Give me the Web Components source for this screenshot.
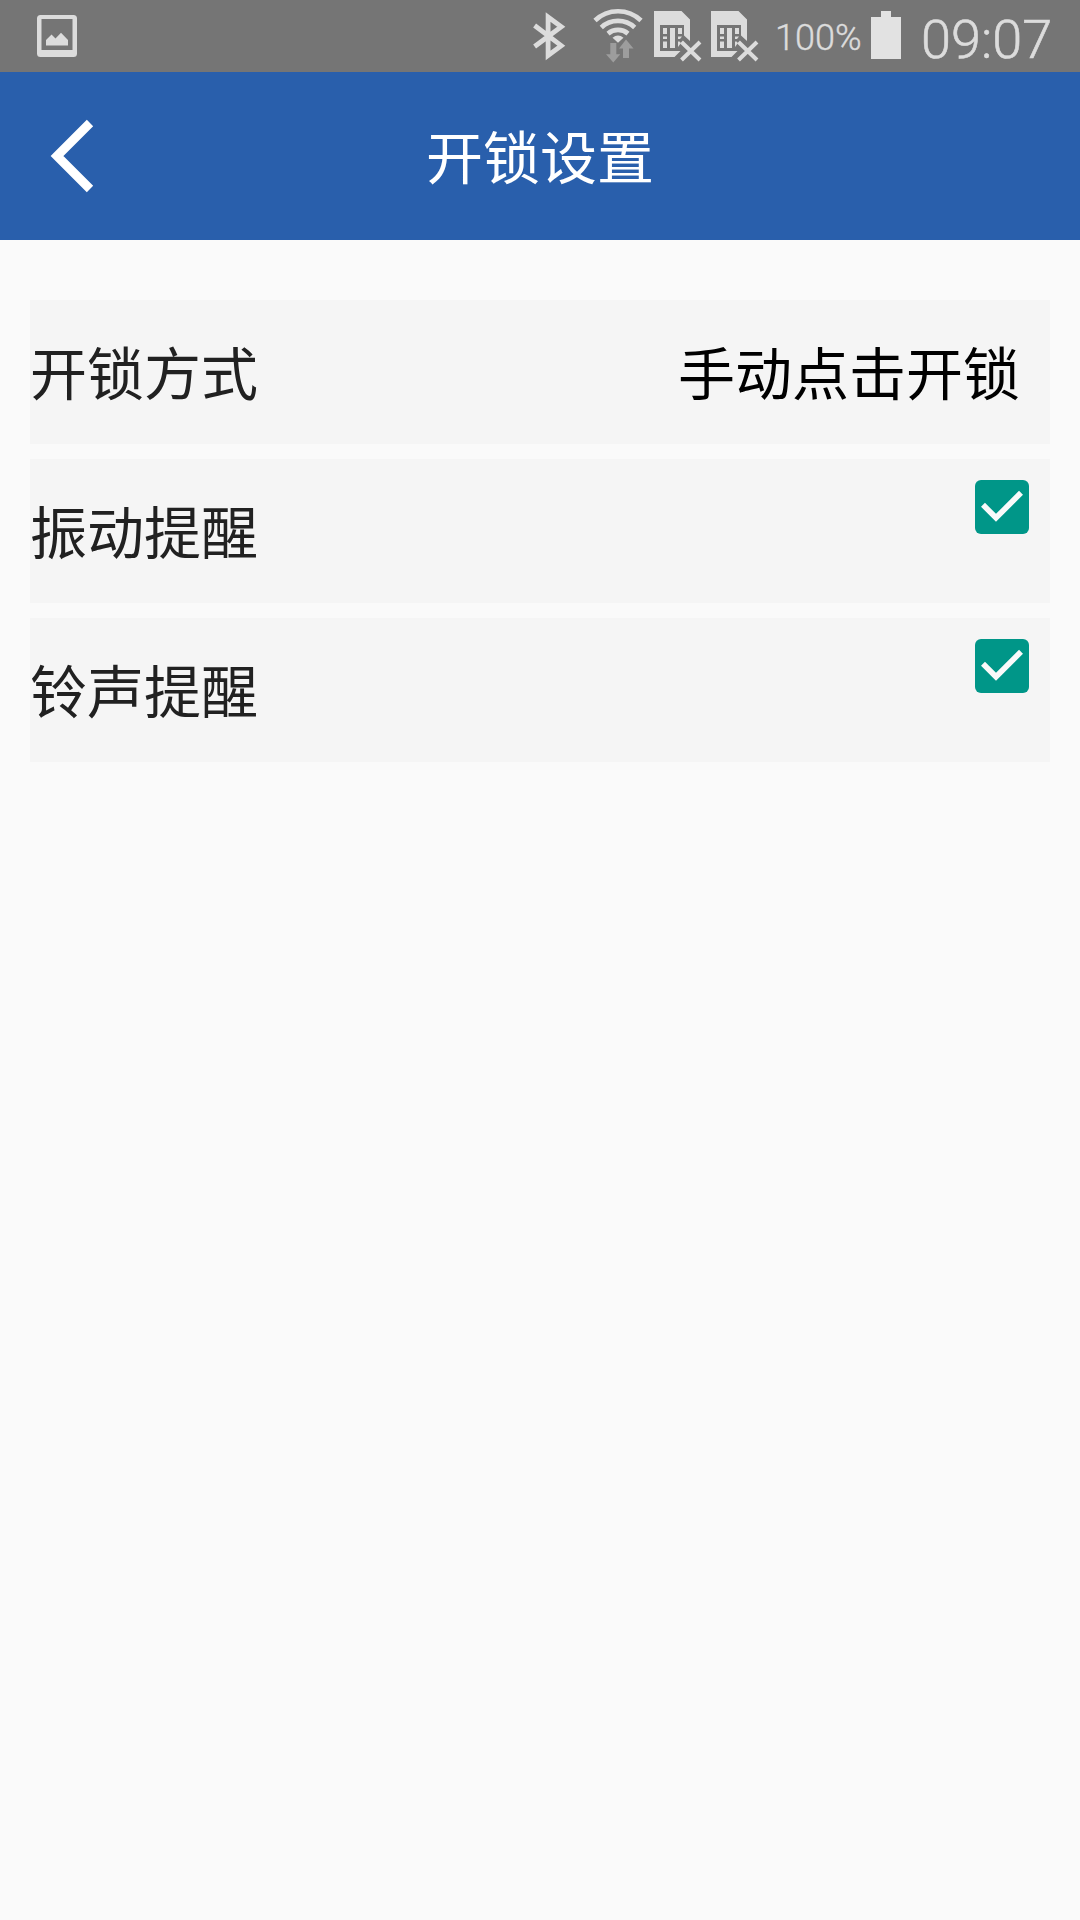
<!DOCTYPE html>
<html lang="zh-CN">
<head>
<meta charset="utf-8">
<title>开锁设置</title>
<style>
  body {
    margin: 0;
    background: #fafafa;
    font-family: Roboto, "Noto Sans CJK SC", sans-serif;
  }
</style>
</head>
<body>
<settings-screen></settings-screen>

<script>
class SimIcon extends HTMLElement {
  constructor(){
    super();
    this.attachShadow({mode: 'open'});
  }

  connectedCallback(){
    this.shadowRoot.innerHTML = `
      <style>
        :host { display: block; width: 48px; height: 72px; }
        svg { display: block; }
      </style>
      <svg width="48" height="72" viewBox="0 0 48 72">
        <path fill="#dcdcdc" d="M0 11H27.5L36 19.5V41L30 35.500V25H6V51H26.5L20.5 57H0Z"/>
        <path fill="#dcdcdc" d="M9 28h4v6H9zM9 36.500h4v2.500H9zM9 41.500h4v6.500H9zM16 28h5v20h-5zM24 28h4v6h-4zM24 36.500h4l-2 2.500h-2zM24 41.500h1.500l1.500 1.500-3 4z"/>
        <path d="M27.5 42L46 60M46 42L27.5 60" stroke="#dcdcdc" stroke-width="4"/>
      </svg>
    `;
  }
}

class StatusBar extends HTMLElement {
  constructor(){
    super();
    this.attachShadow({mode: 'open'});
  }

  connectedCallback(){
    this.shadowRoot.innerHTML = `
      <style>
        :host {
          display: flex;
          height: 72px;
          background: #757575;
          color: #dcdcdc;
          box-sizing: border-box;
          padding: 0 26px 0 37px;
        }
        svg { display: block; flex-shrink: 0; }
        .status {
          display: flex;
          width: 521px;
          margin-left: auto;
          white-space: nowrap;
        }
        .wifi { margin-left: 26px; }
        .sims { display: flex; gap: 9px; margin-left: 20px; }
        .percent {
          width: 87px;
          font-size: 36px;
          font-weight: 300;
          -webkit-text-stroke: 0.4px #dcdcdc;
          line-height: 76px;
          margin: 0 9px 0 16px;
        }
        .time {
          font-size: 54px;
          font-weight: 300;
          -webkit-text-stroke: 0.6px #dcdcdc;
          line-height: 79px;
          margin-left: 20px;
        }
      </style>
      <svg width="40" height="72" viewBox="37 0 40 72">
        <path fill="#dcdcdc" fill-rule="evenodd" d="M40.5 15H73.5Q77 15 77 18.500V53.500Q77 57 73.500 57H40.500Q37 57 37 53.500V18.500Q37 15 40.500 15ZM41.500 19V50H72.500V19Z"/>
        <path fill="#dcdcdc" d="M46 40L51.500 34.500 55.500 38.500 61 32.700 68 40V45.500H46Z"/>
      </svg>
      <div class="status">
        <svg width="34" height="72" viewBox="533.200 0 34 72">
          <path fill="none" stroke="#dcdcdc" stroke-width="4.800" d="M534.800 25.500L561.500 45.700 548.300 55.500V17L561.500 26.700 534.800 46.500"/>
        </svg>
        <svg class="wifi" width="41" height="72" viewBox="593 0 41 72" overflow="visible">
          <g fill="none" stroke="#dcdcdc" stroke-width="4.700">
            <path d="M595 20.500A33.200 33.200 0 0 1 641 20.500"/>
            <path d="M601.300 27.400A24.600 24.600 0 0 1 634.700 27.400"/>
            <path d="M608 33.600A15.600 15.600 0 0 1 628 33.600"/>
          </g>
          <path fill="#dcdcdc" d="M618 42.700L612.500 37.700Q618 33.500 623.500 37.700Z"/>
          <path fill="#9d9d9d" d="M610.300 43H616.300V54.300H620.300L613.300 62.500 606 54.300H610.300ZM623 58V48.500H619L626 39.500 633.500 48.500H629V58Z"/>
        </svg>
        <div class="sims">
          <sim-icon></sim-icon>
          <sim-icon></sim-icon>
        </div>
        <div class="percent">100%</div>
        <svg width="30" height="72" viewBox="0 0 30 72">
          <path fill="#e2e2e2" d="M10 11H20V17H30V59H0V17H10Z"/>
        </svg>
        <div class="time">09:07</div>
      </div>
    `;
  }
}

class TitleBar extends HTMLElement {
  constructor(){
    super();
    this.attachShadow({mode: 'open'});
  }

  connectedCallback(){
    this.shadowRoot.innerHTML = `
      <style>
        :host {
          display: grid;
          grid-template-columns: 1fr auto 1fr;
          align-items: center;
          height: 168px;
          background: #295fac;
          color: #fff;
        }
        button {
          justify-self: start;
          margin: 0 0 0 50px;
          padding: 0;
          border: 0;
          background: none;
        }
        svg { display: block; filter: blur(0.7px); }
        h1 {
          margin: 0;
          padding-top: 8px;
          font-size: 57px;
          font-weight: 400;
          line-height: 84px;
        }
      </style>
      <button aria-label="返回">
        <svg width="46" height="74" viewBox="50 119 46 74">
          <path fill="none" stroke="#fff" stroke-width="9" d="M90 123L57 156 90 189"/>
        </svg>
      </button>
      <h1><slot></slot></h1>
    `;
  }
}

class SettingRow extends HTMLElement {
  constructor(){
    super();
    this.attachShadow({mode: 'open'});
  }

  connectedCallback(){
    this.shadowRoot.innerHTML = `
      <style>
        :host {
          display: flex;
          justify-content: space-between;
          height: 144px;
          background: #f5f5f5;
          color: #212121;
          font-size: 57px;
          line-height: 152px;
        }
        ::slotted([slot="value"]) {
          color: #000;
          margin-right: 30px;
        }
        ::slotted(check-box) {
          margin: 21px 21px 0 0;
        }
      </style>
      <span><slot></slot></span>
      <slot name="value"></slot>
      <slot name="control"></slot>
    `;
  }
}

class CheckBox extends HTMLElement {
  #checked = true;

  constructor(){
    super();
    this.attachShadow({mode: 'open'});
  }

  connectedCallback(){
    this.shadowRoot.innerHTML = `
      <style>
        :host {
          display: block;
          width: 54px;
          height: 54px;
        }
        svg { display: block; }
        .off { display: none; }
      </style>
      <svg width="54" height="54" viewBox="0 0 54 54">
        <rect width="54" height="54" rx="6" fill="#009688"/>
        <path class="tick" fill="none" stroke="#fafafa" stroke-width="5.600" d="M8 24.800L21 37.800 46 12.800"/>
      </svg>
    `;

    const tick = this.shadowRoot.querySelector('.tick');
    this.onclick = () => {
      this.#checked = !this.#checked;
      tick.classList.toggle('off', !this.#checked);
    }
  }
}

class SettingsScreen extends HTMLElement {
  constructor(){
    super();
    this.attachShadow({mode: 'open'});
  }

  connectedCallback(){
    this.shadowRoot.innerHTML = `
      <style>
        :host {
          display: flex;
          flex-direction: column;
          width: 1080px;
          height: 1920px;
          background: #fafafa;
        }
        main {
          display: flex;
          flex-direction: column;
          gap: 15px;
          padding: 60px 30px;
        }
      </style>
      <status-bar></status-bar>
      <title-bar>开锁设置</title-bar>
      <main>
        <setting-row>开锁方式<span slot="value">手动点击开锁</span></setting-row>
        <setting-row>振动提醒<check-box slot="control"></check-box></setting-row>
        <setting-row>铃声提醒<check-box slot="control"></check-box></setting-row>
      </main>
    `;
  }
}

customElements.define('sim-icon', SimIcon);
customElements.define('status-bar', StatusBar);
customElements.define('title-bar', TitleBar);
customElements.define('check-box', CheckBox);
customElements.define('setting-row', SettingRow);
customElements.define('settings-screen', SettingsScreen);
</script>
</body>
</html>
